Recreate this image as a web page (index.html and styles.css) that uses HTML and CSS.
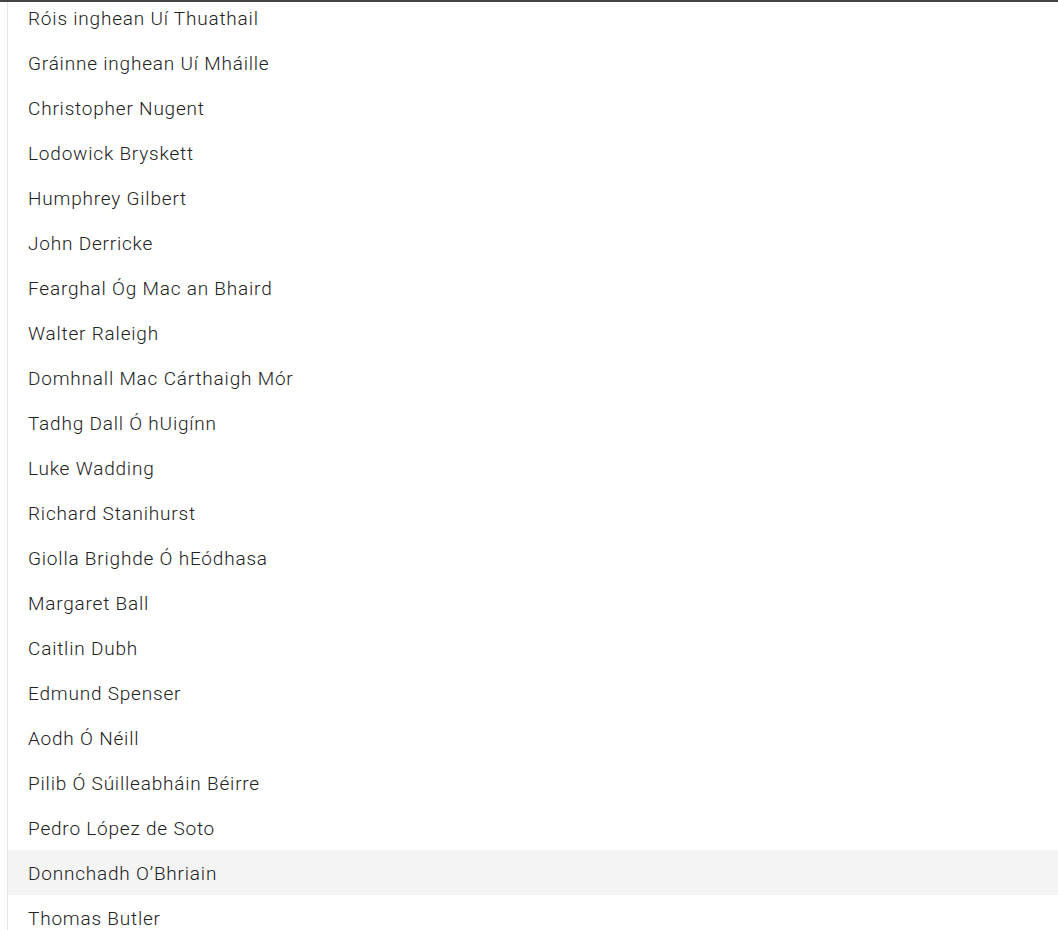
FILE: index.html
```html
<!DOCTYPE html>
<html lang="ga">
<head>
<meta charset="utf-8">
<title>List</title>
<link rel="stylesheet" href="styles.css">
</head>
<body>
<div class="topbar"></div>
<div class="viewport">
  <ul class="list">
    <li class="item">Róis inghean Uí Thuathail</li>
    <li class="item">Gráinne inghean Uí Mháille</li>
    <li class="item">Christopher Nugent</li>
    <li class="item">Lodowick Bryskett</li>
    <li class="item">Humphrey Gilbert</li>
    <li class="item">John Derricke</li>
    <li class="item">Fearghal Óg Mac an Bhaird</li>
    <li class="item">Walter Raleigh</li>
    <li class="item">Domhnall Mac Cárthaigh Mór</li>
    <li class="item">Tadhg Dall Ó hUigínn</li>
    <li class="item">Luke Wadding</li>
    <li class="item">Richard Stanihurst</li>
    <li class="item">Giolla Brighde Ó hEódhasa</li>
    <li class="item">Margaret Ball</li>
    <li class="item">Caitlin Dubh</li>
    <li class="item">Edmund Spenser</li>
    <li class="item">Aodh Ó Néill</li>
    <li class="item">Pilib Ó Súilleabháin Béirre</li>
    <li class="item">Pedro López de Soto</li>
    <li class="item item-hover">Donnchadh O’Bhriain</li>
    <li class="item">Thomas Butler</li>
    <li class="item">Hugh O’Donnell</li>
  </ul>
</div>
</body>
</html>
```
FILE: styles.css
```css
html, body {
  margin: 0;
  padding: 0;
  background: #ffffff;
  overflow: hidden;
}
body {
  font-family: Roboto, "Noto Sans", sans-serif;
  color: #222222;
}
.topbar {
  height: 2px;
  background: #454545;
}
.viewport {
  height: 928px;
  overflow: hidden;
  margin-left: 7px;
  border-left: 1px solid #e6e6e6;
}
.list {
  list-style: none;
  margin: -7px 0 0 0;
  padding: 0;
}
.item {
  height: 43px;
  padding: 2px 0 0 20px;
  line-height: 43px;
  font-size: 19px;
  font-weight: 300;
  letter-spacing: 0.8px;
  white-space: nowrap;
}
.item-hover {
  background: #f4f4f4;
}
```
